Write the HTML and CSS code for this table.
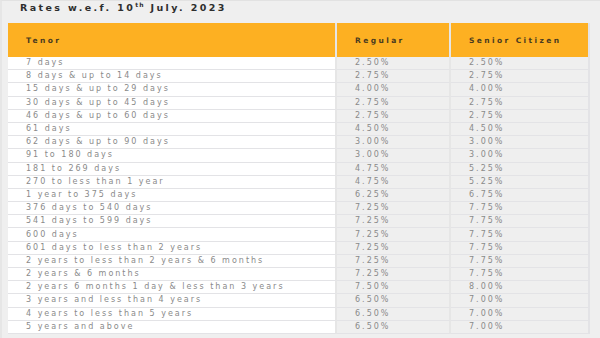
FILE: index.html
```html
<!DOCTYPE html>
<html lang="en">
<head>
  <meta charset="UTF-8" />
  <title>Rates</title>
  <link rel="stylesheet" href="styles.css">
</head>
<body>

<h3 class="rates-title">Rates w.e.f. 10<sup>th</sup> July. 2023</h3>

<table class="rates">
  <thead>
    <tr>
      <th class="col-tenor">Tenor</th>
      <th class="col-reg">Regular</th>
      <th class="col-senior">Senior Citizen</th>
    </tr>
  </thead>
  <tbody>
    <tr><td>7 days</td><td>2.50%</td><td>2.50%</td></tr>
    <tr><td>8 days &amp; up to 14 days</td><td>2.75%</td><td>2.75%</td></tr>
    <tr><td>15 days &amp; up to 29 days</td><td>4.00%</td><td>4.00%</td></tr>
    <tr><td>30 days &amp; up to 45 days</td><td>2.75%</td><td>2.75%</td></tr>
    <tr><td>46 days &amp; up to 60 days</td><td>2.75%</td><td>2.75%</td></tr>
    <tr><td>61 days</td><td>4.50%</td><td>4.50%</td></tr>
    <tr><td>62 days &amp; up to 90 days</td><td>3.00%</td><td>3.00%</td></tr>
    <tr><td>91 to 180 days</td><td>3.00%</td><td>3.00%</td></tr>
    <tr><td>181 to 269 days</td><td>4.75%</td><td>5.25%</td></tr>
    <tr><td>270 to less than 1 year</td><td>4.75%</td><td>5.25%</td></tr>
    <tr><td>1 year to 375 days</td><td>6.25%</td><td>6.75%</td></tr>
    <tr><td>376 days to 540 days</td><td>7.25%</td><td>7.75%</td></tr>
    <tr><td>541 days to 599 days</td><td>7.25%</td><td>7.75%</td></tr>
    <tr><td>600 days</td><td>7.25%</td><td>7.75%</td></tr>
    <tr><td>601 days to less than 2 years</td><td>7.25%</td><td>7.75%</td></tr>
    <tr><td>2 years to less than 2 years &amp; 6 months</td><td>7.25%</td><td>7.75%</td></tr>
    <tr><td>2 years &amp; 6 months</td><td>7.25%</td><td>7.75%</td></tr>
    <tr><td>2 years 6 months 1 day &amp; less than 3 years</td><td>7.50%</td><td>8.00%</td></tr>
    <tr><td>3 years and less than 4 years</td><td>6.50%</td><td>7.00%</td></tr>
    <tr><td>4 years to less than 5 years</td><td>6.50%</td><td>7.00%</td></tr>
    <tr><td>5 years and above</td><td>6.50%</td><td>7.00%</td></tr>
  </tbody>
</table>

</body>
</html>
```

FILE: styles.css
```css
* {
  margin: 0;
  padding: 0;
  box-sizing: border-box;
  font-family: 'DejaVu Sans', sans-serif;
}

body {
  background-color: #efefef;
  border-top: 1px solid #e2e2e2;
  border-left: 2px solid #e6e6e6;
  height: 338px;
  overflow: hidden;
}

.rates-title {
  font-size: 9.5px;
  font-weight: 700;
  letter-spacing: 2.4px;
  color: #2e2e2e;
  padding: 1px 0 0 18px;
  height: 22px;
  line-height: 12px;
}

.rates-title sup {
  font-size: 6px;
  letter-spacing: 1.2px;
  vertical-align: 4px;
  line-height: 0;
}

/* Rates table */
.rates {
  margin-left: 6px;
  width: 582px;
  border-collapse: separate;
  border-spacing: 0;
  border-right: 2px solid #e3e3e6;
  table-layout: fixed;
}

.rates th {
  background-color: #fdb022;
  color: #4a3b20;
  font-size: 7.5px;
  font-weight: 700;
  letter-spacing: 2.4px;
  text-align: left;
  height: 34px;
  border-right: 2px solid #e6e6e6;
  padding-left: 18px;
}

.rates th:last-child,
.rates td:last-child {
  border-right: none;
}

.col-tenor { width: 329px; }
.col-reg { width: 114px; }

.rates td {
  font-size: 8px;
  letter-spacing: 2px;
  color: #8a8a8a;
  height: 13.2px;
  line-height: 12px;
  border-bottom: 1px solid #e3e3e6;
  border-right: 2px solid #e6e6e6;
  background-color: #efefef;
  padding-left: 18px;
  white-space: nowrap;
}

.rates td:first-child {
  background-color: #ffffff;
}
```
